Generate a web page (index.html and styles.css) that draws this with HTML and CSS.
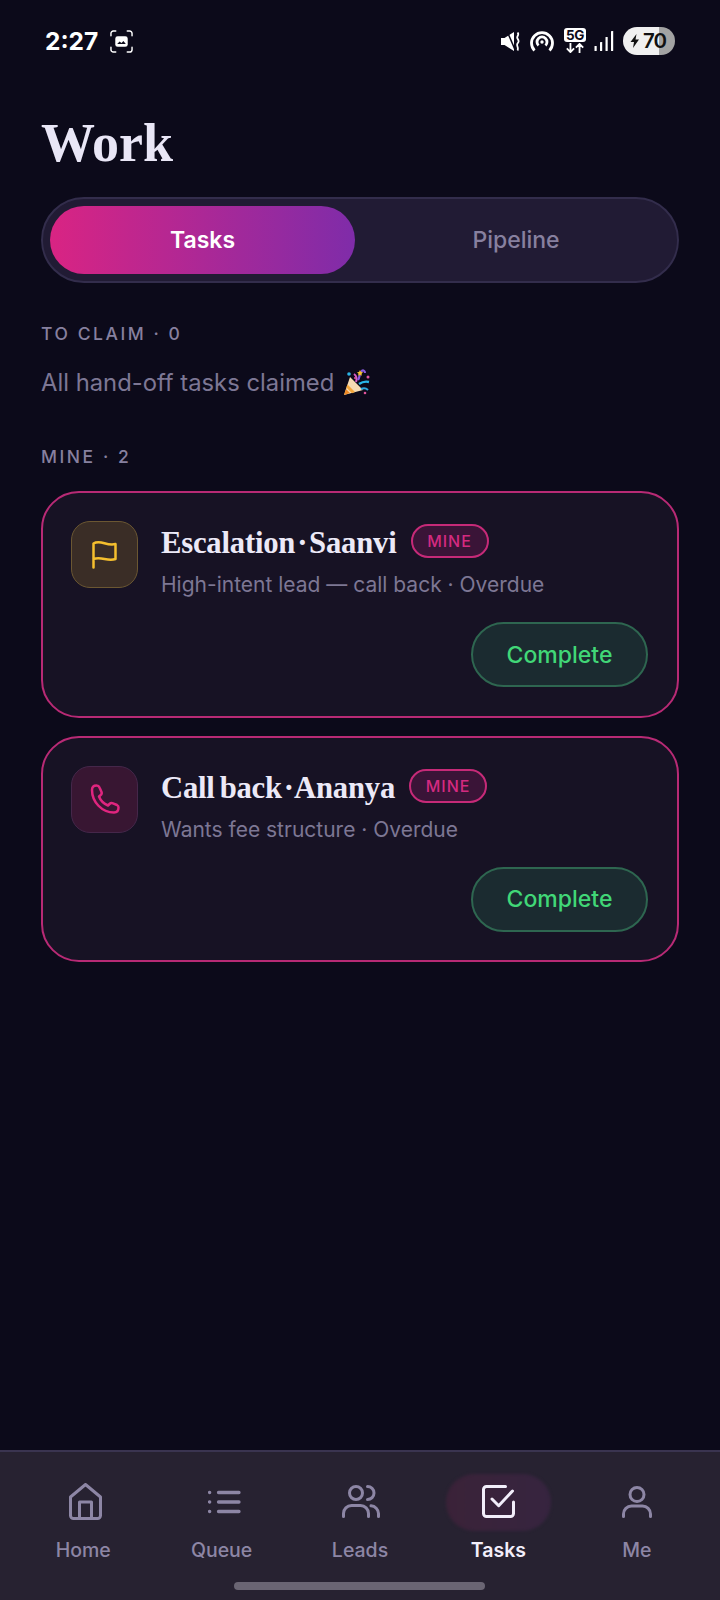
FILE: index.html
```html
<!DOCTYPE html>
<html lang="en">
<head>
<meta charset="utf-8">
<title>Work</title>
<link rel="stylesheet" href="styles.css">
</head>
<body>
<div class="screen">
  <header class="status">
    <div class="status-left">
      <span class="clock">2:27</span>
      <svg class="shot" viewBox="0 0 24 24" fill="none" stroke="#fff" stroke-width="1.5" stroke-linecap="round"><path d="M1 6V3.500A2.500 2.500 0 0 1 3.500 1H6M18 1h2.500A2.500 2.500 0 0 1 23 3.500V6M23 18v2.500a2.500 2.500 0 0 1-2.500 2.500H18M6 23H3.500A2.500 2.500 0 0 1 1 20.500V18"/><rect x="5.500" y="6.500" width="13" height="11" rx="2.500" fill="#fff" stroke="none"/><path d="M7.500 14.500l2.500-2.500 2 1.500 2-2 2.500 3z" fill="#0c0a1a" stroke="none"/></svg>
    </div>
    <div class="status-right">
      <svg class="ic-mute" viewBox="0 0 20 19"><path d="M0 6h3.500L13 0v19L3.500 13H0z" fill="#fff"/><path d="M6 -1L15 20" stroke="#0c0a1a" stroke-width="1.500"/><path d="M16.500 .5c2.500 2.500-1.500 3.500 0 6s1.500 3 0 5 1.500 4 0 7" fill="none" stroke="#fff" stroke-width="1.800"/></svg>
      <svg class="ic-hot" viewBox="0 0 24 24" fill="none" stroke="#fff" stroke-width="2.800"><path d="M4.500 21.500a10.500 10.500 0 1 1 15 0"/><path d="M8.500 16.500a5 5 0 1 1 7 0"/><circle cx="12" cy="13" r="1.700" fill="#fff" stroke="none"/></svg>
      <div class="net">
        <span class="net-5g">5G</span>
        <svg class="net-arrows" viewBox="0 0 22 11" fill="none" stroke="#fff" stroke-width="2"><path d="M6 0v10M2 6l4 4 4-4M16 11V1M12 5l4-4 4 4"/></svg>
      </div>
      <svg class="ic-signal" viewBox="0 0 20 20" fill="#fff"><rect x="0.500" y="15" width="2.200" height="5" rx=".6"/><rect x="6" y="11" width="2.200" height="9" rx=".6"/><rect x="11.500" y="6" width="2.200" height="14" rx=".6"/><rect x="17" y="0" width="2.200" height="20" rx=".6"/></svg>
      <div class="battery">
        <svg class="bolt" viewBox="0 0 10 14"><path d="M6.500 0L0.500 8h3.500l-1 6 6-8.500H5.500z" fill="#111"/></svg>
        <span class="battery-num">70</span>
      </div>
    </div>
  </header>

  <main class="content">
    <h1 class="title">Work</h1>
    <div class="toggle">
      <div class="toggle-item active">Tasks</div>
      <div class="toggle-item">Pipeline</div>
    </div>

    <div class="label">TO CLAIM · 0</div>
    <p class="empty">All hand-off tasks claimed
      <svg class="party" viewBox="0 0 28 28"><path d="M1 26L7 8l13 13z" fill="#f6dcb4"/><path d="M1 26l2-6 4 4z" fill="#f08a24"/><path d="M4.500 15.500l7.500 7.500-3 1.200-5.700-5.700z" fill="#f3a63b"/><path d="M11 5c3 2 3 5 2 8" stroke="#d65cc4" stroke-width="2" fill="none"/><path d="M15 11c2-3 1-5 3-8s4-1 4 1" stroke="#8a5ce0" stroke-width="2.200" fill="none"/><path d="M16 15c3-2 6-3 10-2" stroke="#29b6e8" stroke-width="2.400" fill="none"/><path d="M18 20c2-1 5-1 7 1" stroke="#2fa8e0" stroke-width="2" fill="none"/><circle cx="6" cy="5" r="1.800" fill="#2ab4e6"/><path d="M17 1l1 2 2 .3-1.500 1.400.4 2-1.900-1-1.900 1 .4-2L14 3.300l2-.3z" fill="#f7c22e"/><circle cx="25" cy="8" r="1.500" fill="#e0549c"/><circle cx="22" cy="24" r="1.300" fill="#e0549c"/><circle cx="12" cy="9" r="1" fill="#e0549c"/></svg>
    </p>

    <div class="label label-mine">MINE · 2</div>

    <section class="card">
      <div class="card-top">
        <div class="icon-box icon-flag">
          <svg viewBox="0 0 25 29" fill="none" stroke="#f5bf2e" stroke-width="2.500" stroke-linecap="round" stroke-linejoin="round"><path d="M1.500 27.500V3.500c7-4.500 13 3 22 .5v15c-8 3-14-3-22 0"/></svg>
        </div>
        <div class="card-body">
          <div class="card-head">
            <h2 class="card-title">Escalation <span class="sep">·</span> Saanvi</h2>
            <span class="badge">MINE</span>
          </div>
          <p class="card-sub">High-intent lead — call back · Overdue</p>
        </div>
      </div>
      <div class="card-actions"><button class="complete">Complete</button></div>
    </section>

    <section class="card">
      <div class="card-top">
        <div class="icon-box icon-phone">
          <svg viewBox="0 0 30 30" fill="none" stroke="#e0257f" stroke-width="2.500" stroke-linecap="round" stroke-linejoin="round"><path d="M2 6C2 3 4 1.500 6.500 1.500c1.500 0 2.500.8 3 2l2 4.500c.5 1.300 0 2.500-1 3.200L9 12.500c1.500 4 4.500 7 9 9l1.500-1.500c1-1 2-1.300 3.500-.7l4 1.700c1 .5 1.500 1.500 1.500 2.500 0 3-1.500 5-4.500 5C12 28.500 2 18 2 6z"/></svg>
        </div>
        <div class="card-body">
          <div class="card-head">
            <h2 class="card-title">Call back <span class="sep">·</span> Ananya</h2>
            <span class="badge">MINE</span>
          </div>
          <p class="card-sub">Wants fee structure · Overdue</p>
        </div>
      </div>
      <div class="card-actions"><button class="complete">Complete</button></div>
    </section>
  </main>

  <nav class="nav">
    <div class="nav-item nav-home">
      <div class="nav-icon"><svg viewBox="0 0 33 37" fill="none" stroke="currentColor" stroke-width="3" stroke-linecap="round" stroke-linejoin="round"><path d="M1.500 14L16.500 1.500 31.500 14v18.500a3 3 0 0 1-3 3h-24a3 3 0 0 1-3-3z"/><path d="M10.500 35V19h12v16"/></svg></div>
      <span>Home</span>
    </div>
    <div class="nav-item nav-queue">
      <div class="nav-icon"><svg viewBox="0 0 33 24" fill="none" stroke="currentColor" stroke-width="3.300" stroke-linecap="round"><path d="M10.500 2.500h20.500M10.500 12h20.500M10.500 21.500h20.500M1.500 2.500h.2M1.500 12h.2M1.500 21.500h.2"/></svg></div>
      <span>Queue</span>
    </div>
    <div class="nav-item nav-leads">
      <div class="nav-icon"><svg viewBox="0 0 38 33" fill="none" stroke="currentColor" stroke-width="3" stroke-linecap="round"><circle cx="14" cy="8" r="6.500"/><path d="M1.500 31.500V28.500a8 8 0 0 1 8-8h9a8 8 0 0 1 8 8v3"/><path d="M25.500 1.500a6.500 6.500 0 0 1 0 13M29 20.800a8 8 0 0 1 7.500 7.700v3"/></svg></div>
      <span>Leads</span>
    </div>
    <div class="nav-item nav-tasks">
      <div class="nav-pill"></div>
      <div class="nav-icon"><svg viewBox="0 0 33 33" fill="none" stroke="currentColor" stroke-width="3" stroke-linecap="round" stroke-linejoin="round"><path d="M23.500 1.500H4.500a3 3 0 0 0-3 3v24a3 3 0 0 0 3 3h24a3 3 0 0 0 3-3V17"/><path d="M10 14l6.700 6.700L30.500 6"/></svg></div>
      <span>Tasks</span>
    </div>
    <div class="nav-item nav-me">
      <div class="nav-icon"><svg viewBox="0 0 30 32" fill="none" stroke="currentColor" stroke-width="3" stroke-linecap="round"><circle cx="15" cy="8.500" r="7"/><path d="M1.500 30.500V28a8 8 0 0 1 8-8h11a8 8 0 0 1 8 8v2.500"/></svg></div>
      <span>Me</span>
    </div>
    <div class="home-bar"></div>
  </nav>
</div>
</body>
</html>
```

FILE: styles.css
```css
* { box-sizing: border-box; }
html, body { margin: 0; padding: 0; }
body {
  width: 720px;
  height: 1600px;
  overflow: hidden;
  background: #0c0a1a;
  font-family: "Inter", "Noto Sans", sans-serif;
  color: #ece9f7;
}
.screen {
  width: 720px;
  height: 1600px;
  display: flex;
  flex-direction: column;
}

/* status bar */
.status {
  height: 84px;
  flex: none;
  padding: 26px 45px 0 45px;
  display: flex;
  justify-content: space-between;
  align-items: flex-start;
}
.status-left { display: flex; align-items: center; gap: 12px; height: 30px; }
.clock {
  font-size: 24.500px;
  font-weight: 700;
  color: #fff;
}
.shot { width: 23px; height: 23px; }
.status-right { display: flex; align-items: center; height: 30px; }
.ic-mute { width: 20px; height: 19px; margin-right: 9px; }
.ic-hot { width: 24px; height: 24px; margin-right: 10px; }
.net { width: 22px; display: flex; flex-direction: column; align-items: center; margin-right: 8px; margin-top: -2px; }
.net-5g {
  display: block;
  width: 22px;
  height: 14px;
  border-radius: 3px;
  background: #fff;
  color: #0c0a1a;
  font-size: 13.500px;
  line-height: 14px;
  font-weight: 700;
  text-align: center;
  letter-spacing: -.5px;
}
.net-arrows { width: 20px; height: 10px; margin-top: 1px; }
.ic-signal { width: 20px; height: 20px; margin-right: 9px; }
.battery {
  width: 52px;
  height: 28px;
  border-radius: 14px;
  background: linear-gradient(90deg, #f0f0f0 0 69%, #a3a3a3 69% 100%);
  display: flex;
  align-items: center;
  padding-left: 7px;
  gap: 3px;
  color: #111;
}
.bolt { width: 10px; height: 14px; flex: none; }
.battery-num { font-size: 20.500px; font-weight: 600; letter-spacing: -1px; line-height: 28px; }

/* content */
.content { flex: 1; padding: 0 41px; min-height: 0; }
.title {
  margin: 29px 0 0 0;
  height: 61px;
  font-family: "Liberation Serif", serif;
  font-size: 54px;
  line-height: 61px;
  font-weight: 700;
  color: #e9e6f6;
}
.toggle {
  margin-top: 23px;
  width: 638px;
  height: 86px;
  border: 2px solid #332d4c;
  border-radius: 43px;
  background: #211b34;
  padding: 7px;
  display: flex;
  gap: 7px;
}
.toggle-item {
  flex: 1;
  border-radius: 34px;
  display: flex;
  align-items: center;
  justify-content: center;
  font-size: 23px;
  font-weight: 500;
  color: #87809f;
}
.toggle-item.active {
  flex: none;
  width: 305px;
  font-weight: 600;
  color: #fff;
  background: linear-gradient(90deg, #d92483 0%, #7f2ca9 100%);
}
.label {
  margin-top: 41px;
  font-size: 17.500px;
  line-height: 20px;
  font-weight: 550;
  letter-spacing: 2.550px;
  color: #87809f;
}
.label-mine { margin-top: 49px; }
.empty {
  margin: 24px 0 0 0;
  font-size: 23.800px;
  line-height: 30px;
  color: #7d7794;
  display: flex;
  align-items: center;
  gap: 9px;
}
.party { width: 28px; height: 28px; flex: none; }

.card {
  margin-top: 18px;
  width: 638px;
  height: 226.500px;
  border: 2px solid #b82a75;
  border-radius: 38px;
  background: #171224;
  padding: 28px 29px 0 28px;
}
.label + .card { margin-top: 24px; }
.card-top { display: flex; gap: 23px; }
.icon-box {
  width: 67px;
  height: 67px;
  flex: none;
  border-radius: 19px;
  display: flex;
  align-items: center;
  justify-content: center;
}
.icon-flag { background: #3a2d26; border: 1.500px solid #6b5732; }
.icon-flag svg { width: 25px; height: 29px; }
.icon-phone { background: #381632; border: 1.500px solid #45274a; }
.icon-phone svg { width: 30px; height: 30px; }
.card-body { min-width: 0; }
.card-head { display: flex; align-items: center; gap: 14px; height: 40px; margin-top: 2px; }
.card-title {
  margin: 0;
  font-family: "Liberation Serif", serif;
  font-size: 30.700px;
  line-height: 40px;
  font-weight: 700;
  letter-spacing: -.22px;
  word-spacing: -2.500px;
  color: #ece9f7;
  white-space: nowrap;
}
.sep { margin: 0 -3px; }
.badge {
  width: 78px;
  height: 34px;
  margin-bottom: 4px;
  border: 2px solid #c62a78;
  border-radius: 17px;
  background: #3a1437;
  color: #d42a80;
  font-size: 16px;
  font-weight: 500;
  letter-spacing: 1px;
  display: flex;
  align-items: center;
  justify-content: center;
}
.card-sub {
  margin: 9px 0 0 0;
  font-size: 21px;
  line-height: 26px;
  color: #7d7794;
  white-space: nowrap;
}
.card-actions { display: flex; justify-content: flex-end; margin-top: 24px; }
.complete {
  width: 177px;
  height: 65px;
  border: 2px solid #2e6650;
  border-radius: 33px;
  background: #1b2b30;
  color: #41d777;
  font-family: inherit;
  font-size: 23px;
  font-weight: 500;
  padding: 0;
}

/* bottom navigation */
.nav {
  flex: none;
  height: 150px;
  position: relative;
  background: #272231;
  border-top: 2px solid #3a3450;
  padding: 22px 14px 0;
  display: flex;
}
.nav-item {
  flex: 1;
  position: relative;
  display: flex;
  flex-direction: column;
  align-items: center;
  font-size: 19.500px;
  font-weight: 500;
  color: #8d86a5;
}
.nav-icon {
  position: relative;
  height: 55px;
  width: 100%;
  display: flex;
  align-items: center;
  justify-content: center;
}
.nav-home svg { width: 33px; height: 37px; margin-left: 4px; }
.nav-queue svg { width: 33px; height: 24px; margin-left: 5px; }
.nav-leads svg { width: 38px; height: 33px; margin-left: 2px; }
.nav-tasks svg { width: 33px; height: 33px; }
.nav-me svg { width: 30px; height: 32px; }
.nav-item span { margin-top: 9px; line-height: 24px; }
.nav-tasks { color: #f2eefa; font-weight: 600; }
.nav-pill {
  position: absolute;
  left: 17px;
  top: 0;
  width: 105px;
  height: 57px;
  border-radius: 29px;
  background: linear-gradient(90deg, #3a2238, #36243f);
  filter: blur(1.500px);
}
.home-bar {
  position: absolute;
  left: 234px;
  bottom: 10px;
  width: 251px;
  height: 8px;
  border-radius: 4px;
  background: #6a6573;
}
```
